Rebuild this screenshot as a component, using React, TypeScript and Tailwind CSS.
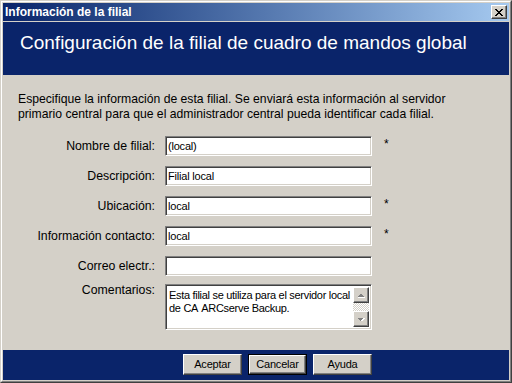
import React from "react";

const raised =
  "border border-t-white border-l-white border-r-[#404040] border-b-[#404040] shadow-[inset_-1px_-1px_0_#808080,inset_1px_1px_0_#d4d0c8]";
const sunken =
  "border border-t-[#808080] border-l-[#808080] border-r-white border-b-white shadow-[inset_1px_1px_0_#404040,inset_-1px_-1px_0_#d4d0c8]";

function Field({ label, value, required }: { label: string; value: string; required?: boolean }) {
  return (
    <div className="flex items-center h-[20px]">
      <div className="w-[137px] text-right text-[12.3px] leading-[14px] whitespace-nowrap">{label}</div>
      <input
        readOnly
        value={value}
        className={`ml-[10px] w-[207px] h-[20px] bg-white pl-[2px] text-[11px] tracking-[-0.2px] outline-none font-['Liberation_Sans',Arial,sans-serif] text-black ${sunken}`}
      />
      {required ? <span className="ml-[12px] text-[12px] leading-none -mt-[4px]">*</span> : null}
    </div>
  );
}

function Arrow({ up }: { up?: boolean }) {
  return (
    <div className={`w-[16px] h-[16px] bg-[#d4d0c8] flex items-center justify-center ${raised}`}>
      <svg width="8" height="5" viewBox="0 0 8 5" shapeRendering="crispEdges">
        {up ? (
          <>
            <path d="M1 4.5h7L4.5 1z" fill="#ffffff" />
            <path d="M0 4h7L3.5 0.5z" fill="#808080" />
          </>
        ) : (
          <>
            <path d="M1 1h7L4.5 4.5z" fill="#ffffff" />
            <path d="M0 0.5h7L3.5 4z" fill="#808080" />
          </>
        )}
      </svg>
    </div>
  );
}

function Btn({ label, def }: { label: string; def?: boolean }) {
  const inner = (
    <div className={`w-full h-full bg-[#d4d0c8] flex items-center justify-center text-[11px] tracking-[-0.2px] ${raised}`}>
      {label}
    </div>
  );
  return def ? (
    <div className="w-[59px] h-[21px] border border-black">{inner}</div>
  ) : (
    <div className="w-[59px] h-[21px]">{inner}</div>
  );
}

export default function App() {
  return (
    <div className="w-[512px] h-[383px] bg-[#d4d0c8] border border-t-[#d4d0c8] border-l-[#d4d0c8] border-r-[#404040] border-b-[#404040] font-['Liberation_Sans',Arial,sans-serif] text-black">
      <div className="w-full h-full border border-t-white border-l-white border-r-[#808080] border-b-[#808080] p-px flex flex-col">
        {/* Title bar */}
        <div className="h-[18px] shrink-0 flex items-center justify-between bg-gradient-to-r from-[#0a246a] to-[#a6caf0] pl-[2px] pr-[2px]">
          <span className="text-white font-bold text-[12px] leading-none">Información de la filial</span>
          <div className={`w-[16px] h-[14px] bg-[#d4d0c8] flex items-center justify-center ${raised}`}>
            <svg width="8" height="7" viewBox="0 0 8 7" shapeRendering="crispEdges">
              <path d="M0 0h2v1h1v1h2V1h1V0h2v1H7v1H6v1H5v1h1v1h1v1h1v1H6V6H5V5H3v1H2v1H0V6h1V5h1V4h1V3H2V2H1V1H0z" fill="#000" />
            </svg>
          </div>
        </div>
        <div className="h-px shrink-0" />
        {/* Header band */}
        <div className="h-[53px] shrink-0 bg-[#0a246a] pl-[17px] pt-[10px]">
          <div className="text-white text-[19px] leading-[22px] whitespace-nowrap">
            Configuración de la filial de cuadro de mandos global
          </div>
        </div>
        {/* Body */}
        <div className="flex-1 pl-[15px] pt-[17px]">
          <p className="text-[12.2px] leading-[15px] whitespace-nowrap">
            Especifique la información de esta filial. Se enviará esta información al servidor
            <br />
            primario central para que el administrador central pueda identificar cada filial.
          </p>
          <div className="mt-[14px] flex flex-col gap-[10px]">
            <Field label="Nombre de filial:" value="(local)" required />
            <Field label="Descripción:" value="Filial local" />
            <Field label="Ubicación:" value="local" required />
            <Field label="Información contacto:" value="local" required />
            <Field label="Correo electr.:" value="" />
          </div>
          <div className="mt-[8px] flex">
            <div className="w-[137px] text-right text-[12.3px] leading-[13px]">Comentarios:</div>
            <div className={`ml-[10px] w-[207px] h-[46px] bg-white flex p-[2px] ${sunken}`}>
              <div className="flex-1 min-w-0 pl-px pt-[2px] text-[11px] leading-[13px] tracking-[-0.3px] whitespace-nowrap">
                Esta filial se utiliza para el servidor local
                <br />
                de CA <span className="ml-[1px]">ARCserve Backup.</span>
              </div>
              <div className="w-[16px] shrink-0 flex flex-col">
                <Arrow up />
                <div className="flex-1 bg-[repeating-conic-gradient(#d4d0c8_0_25%,#ffffff_0_50%)] bg-[length:2px_2px]" />
                <Arrow />
              </div>
            </div>
          </div>
        </div>
        {/* Footer */}
        <div className="h-[30px] shrink-0 bg-[#0a246a] flex items-start pt-[4px] pl-[180px] gap-[6px]">
          <Btn label="Aceptar" />
          <Btn label="Cancelar" def />
          <Btn label="Ayuda" />
        </div>
      </div>
    </div>
  );
}
